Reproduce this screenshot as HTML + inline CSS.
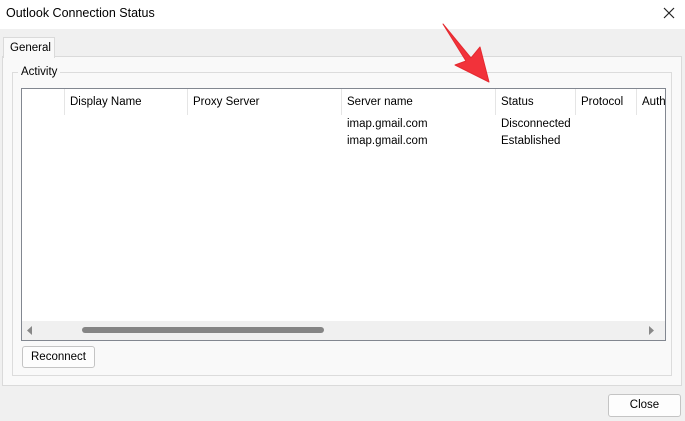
<!DOCTYPE html>
<html><head><style>
*{margin:0;padding:0;box-sizing:border-box}
body{width:685px;height:421px;background:#f0f0f0;font-family:"Liberation Sans",sans-serif;font-size:11.5px;color:#000;position:relative;overflow:hidden}
.abs{position:absolute}
.btn{position:absolute;background:#fdfdfd;border:1px solid #c4c4c4;border-radius:3px;text-align:center;line-height:20px}
</style></head><body>
<div class="abs" style="left:0;top:0;width:685px;height:29px;background:#fff"></div>
<div class="abs" style="left:6px;top:6px;font-size:12.5px">Outlook Connection Status</div>
<svg class="abs" style="left:662px;top:6px" width="14" height="14"><path d="M2 2L12 12M12 2L2 12" stroke="#222" stroke-width="1.2"/></svg>
<div class="abs" style="left:2px;top:56px;width:680px;height:330px;background:#f9f9f9;border:1px solid #dadada"></div>
<div class="abs" style="left:3px;top:37px;width:52px;height:21px;background:#f9f9f9;border:1px solid #dadada;border-bottom:none;padding:4px 0 0 6px">General</div>
<div class="abs" style="left:12px;top:72px;width:660px;height:304px;border:1px solid #dcdcdc"></div>
<div class="abs" style="left:18px;top:66px;background:#f9f9f9;padding:0 3px">Activity</div>
<div class="abs" style="left:21px;top:88px;width:645px;height:253px;background:#fff;border:1px solid #828790;overflow:hidden">
 <div class="abs" style="left:42px;top:0;width:1px;height:26px;background:#e5e5e5"></div>
 <div class="abs" style="left:165px;top:0;width:1px;height:26px;background:#e5e5e5"></div>
 <div class="abs" style="left:319px;top:0;width:1px;height:26px;background:#e5e5e5"></div>
 <div class="abs" style="left:473px;top:0;width:1px;height:26px;background:#e5e5e5"></div>
 <div class="abs" style="left:553px;top:0;width:1px;height:26px;background:#e5e5e5"></div>
 <div class="abs" style="left:614px;top:0;width:1px;height:26px;background:#e5e5e5"></div>
 <div class="abs" style="left:48px;top:7px">Display Name</div>
 <div class="abs" style="left:171px;top:7px">Proxy Server</div>
 <div class="abs" style="left:325px;top:7px">Server name</div>
 <div class="abs" style="left:479px;top:7px">Status</div>
 <div class="abs" style="left:559px;top:7px">Protocol</div>
 <div class="abs" style="left:620px;top:7px">Auth</div>
 <div class="abs" style="left:325px;top:29px">imap.gmail.com</div>
 <div class="abs" style="left:479px;top:29px">Disconnected</div>
 <div class="abs" style="left:325px;top:46px">imap.gmail.com</div>
 <div class="abs" style="left:479px;top:46px">Established</div>
 <div class="abs" style="left:0;top:232px;width:645px;height:20px;background:#f0f0f0"></div>
 <svg class="abs" style="left:5px;top:237px" width="6" height="9"><path d="M5 0L0 4.5L5 9Z" fill="#888"/></svg>
 <svg class="abs" style="left:627px;top:237px" width="6" height="9"><path d="M0 0L5 4.5L0 9Z" fill="#888"/></svg>
 <div class="abs" style="left:60px;top:238px;width:242px;height:6px;border-radius:3px;background:#858585"></div>
</div>
<div class="btn" style="left:22px;top:346px;width:73px;height:22px">Reconnect</div>
<div class="btn" style="left:608px;top:394px;width:73px;height:23px">Close</div>
<svg class="abs" style="left:435px;top:18px" width="65" height="75"><path d="M8 6L36 40L45 29L54 64L20 47L31 43Z" fill="#f2323a" stroke="#e52a30" stroke-width="1" stroke-linejoin="round"/></svg>
</body></html>
